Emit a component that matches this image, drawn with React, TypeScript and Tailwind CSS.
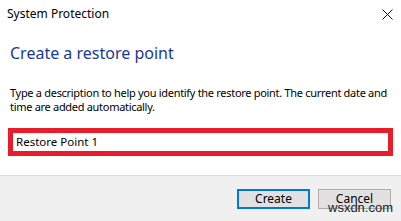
export default function App() {
  return (
    <div
      className="relative w-[401px] h-[221px] bg-white overflow-hidden text-black"
      style={{ fontFamily: '"Noto Sans", "Open Sans", sans-serif' }}
    >
      {/* Title bar */}
      <div className="flex items-center justify-between h-[28px] pl-[7px] pr-[7px]">
        <span className="text-[12px] leading-none">System Protection</span>
        <svg width="11" height="11" viewBox="0 0 11 11" className="mr-[1px]">
          <path d="M0.5 0.5 L10.5 10.5 M10.5 0.5 L0.5 10.5" stroke="#111" strokeWidth="1" />
        </svg>
      </div>

      {/* Body */}
      <div className="h-[147px] flex flex-col px-[8px]">
        <h1 className="mt-[15px] ml-[2px] text-[16px] leading-[20px] text-[#1a3a94]">Create a restore point</h1>
        <p className="mt-[23px] ml-[2px] text-[11px] leading-[14px] tracking-[-0.3px] whitespace-nowrap">
          Type a description to help you identify the restore point. The current date and
          <br />
          time are added automatically.
        </p>
        <div className="mt-[14px] h-[28px] border-[5px] border-[#e81c2a] flex items-center px-[3px]">
          <span className="text-[11.5px] leading-none">Restore Point 1</span>
        </div>
      </div>

      {/* Footer */}
      <div className="h-[46px] border-t border-[#dfdfdf] bg-[#f0f0f0] flex justify-end gap-[8px] pt-[13px] pr-[10px]">
        <button className="w-[73px] h-[20px] border-2 border-[#0078d7] bg-[#e1e1e1] text-[12px] leading-none">Create</button>
        <button className="w-[73px] h-[20px] border border-[#adadad] bg-[#e1e1e1] text-[12px] leading-none">Cancel</button>
      </div>

      {/* Watermark */}
      <span
        className="absolute left-[328px] top-[201px] text-[13px] leading-none text-[#222]"
        style={{ fontFamily: '"Liberation Sans", Arial, sans-serif' }}
      >
        wsxdn.com
      </span>
    </div>
  );
}
